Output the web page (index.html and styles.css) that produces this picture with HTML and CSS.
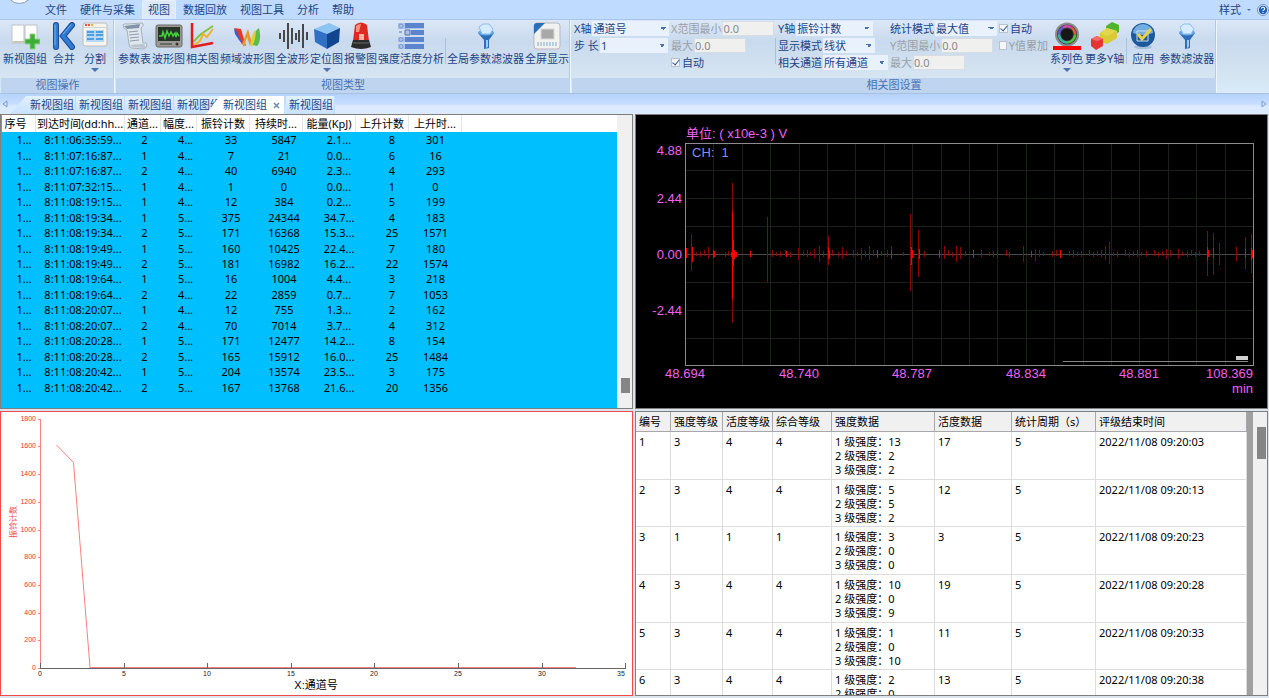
FILE: index.html
```
<!DOCTYPE html>
<html lang="zh-CN">

<head>
    <meta charset="utf-8">
    <title>视图</title>
    <link rel="stylesheet" href="styles.css">
</head>

<body>
    <nav class="menu">
        <span class="menu__orb"></span>
        <a class="menu__item" href="#">文件</a>
        <a class="menu__item" href="#">硬件与采集</a>
        <a class="menu__item active" href="#">视图</a>
        <a class="menu__item" href="#">数据回放</a>
        <a class="menu__item" href="#">视图工具</a>
        <a class="menu__item" href="#">分析</a>
        <a class="menu__item" href="#">帮助</a>
        <div class="menu__right">
            <button class="menu__style">样式<i class="caret small"></i></button>
            <svg width="12" height="12" viewBox="0 0 12 12">
                <circle cx="6" cy="6" r="5.5" fill="#e8eef8" stroke="#5b7fb5" stroke-width=".8" />
                <circle cx="6" cy="6" r="4.2" fill="#1f5fb8" />
                <path d="M4.4 4.8a1.6 1.5 0 1 1 2.4 1.2q-.8.4-.8 1.1M6 8.1v.9" fill="none" stroke="#fff" stroke-width="1.1" />
            </svg>
        </div>
    </nav>

    <header class="ribbon">
        <section class="group">
            <div class="group__body wide">
                <button class="tool">
                    <svg width="30" height="28" viewBox="0 0 30 28">
                        <path d="M2 3h12v18H2zM15 3h12v18H15z" fill="#fdfdfb" stroke="#bfc3c6" />
                        <path d="M3 20h24" stroke="#c9c6bb" stroke-width="2" />
                        <path d="M20 12h5v5h5v5h-5v5h-5v-5h-5v-5h5z" fill="#3fae38" stroke="#8fd486" />
                    </svg>
                    新视图组
                </button>
                <button class="tool">
                    <svg width="26" height="28" viewBox="0 0 26 28">
                        <path d="M5 3v22M21 3 12 14l9 11" fill="none" stroke="#1c4c94" stroke-width="6" stroke-linecap="round" />
                        <path d="M5 3v22M21 3 12 14l9 11" fill="none" stroke="#2f7bd4" stroke-width="4" stroke-linecap="round" />
                        <path d="M4 3v20M20 3l-8 9" fill="none" stroke="#79b2ec" stroke-linecap="round" />
                    </svg>
                    合并
                </button>
                <button class="tool">
                    <svg width="28" height="28" viewBox="0 0 28 28">
                        <rect x="2" y="1" width="24" height="23" rx="2" fill="#f5f4ef" stroke="#bbb" />
                        <path d="M2.500 5.500h23" stroke="#d4d4d0" />
                        <path d="M4 3h2M7 3h2" stroke="#e05a3a" stroke-width="2" />
                        <path d="M10 3h2" stroke="#e6ac48" stroke-width="2" />
                        <rect x="5" y="8" width="18" height="12" fill="#b7d8f4" />
                        <path d="M6 10h7M6 13h7M6 17h7M15 10h7M15 13h7M15 17h7" stroke="#4f9fe0" stroke-width="2" />
                    </svg>
                    分割
                    <i class="caret"></i>
                </button>
            </div>
            <h2 class="group__title">视图操作</h2>
        </section>

        <section class="group views">
            <div class="group__body">
                <button class="tool">
                    <svg width="28" height="28" viewBox="0 0 28 28">
                        <path d="M2 3q2-2 5-1l14-1q3 2-1 5l2 15q4-1 4 2 0 3-4 4l-12-1q-2-1-2-4L6 8Q2 7 2 3z" fill="#dfe6ee" stroke="#a5b1be" />
                        <path d="M3 4l16-2-1 4-12 1z" fill="#8295a8" />
                        <path d="M8 10l9-1M8 13l10-1M9 16l9-1M9 19l9-1" stroke="#8d9cac" />
                        <path d="M9 23l12-1q4 0 3 4l-13-1z" fill="#b8c4d0" />
                    </svg>
                    参数表
                </button>
                <button class="tool">
                    <svg width="28" height="28" viewBox="0 0 28 28">
                        <rect x="1" y="3" width="26" height="22" rx="2" fill="#9a9994" stroke="#6c6b67" />
                        <rect x="3" y="5" width="22" height="14" fill="#26352a" />
                        <path d="M4 14h3l1-4 2 6 2-7 2 5 2-4 2 4 2-3 1 4 1-4 2 3" fill="none" stroke="#45d03c" stroke-width="1.500" />
                        <path d="M5 22h12" stroke="#666" stroke-width="2" />
                        <circle cx="22" cy="22" r="1.500" fill="#333" />
                    </svg>
                    波形图
                </button>
                <button class="tool">
                    <svg width="28" height="28" viewBox="0 0 28 28">
                        <path d="M4 20 12 12 24 4" fill="none" stroke="#84c443" stroke-width="2" />
                        <path d="M5 23l6-4 3-7 4 3 6-8" fill="none" stroke="#f0b32a" stroke-width="2" />
                        <path d="M3 1v24l21-4" fill="none" stroke="#e01c1c" stroke-width="2.500" />
                    </svg>
                    相关图
                </button>
                <button class="tool">
                    <svg width="30" height="28" viewBox="0 0 30 28">
                        <path d="M1 6l7 1 5 17-4-2z" fill="#e23a28" />
                        <path d="M1 7l2 1 7 15-4-5-4-6z" fill="#3c5bd0" />
                        <path d="M9 22l6-15 4 14-2 3-3-9-3 10z" fill="#e8982c" />
                        <path d="M17 22c3-4 3-12 9-16q3 12-2 18z" fill="#5dbb4a" />
                        <path d="M17 22c2-3 1-11 6-14q0 9-4 17z" fill="#d9d23a" />
                    </svg>
                    频域波形图
                </button>
                <button class="tool">
                    <svg width="30" height="28" viewBox="0 0 30 28">
                        <path d="M2 11v6M6 8v12M10 1v26M14 6v16M18 11v7M21 8v12M25 2v24M29 10v8" stroke="#484848" stroke-width="2" />
                    </svg>
                    全波形
                </button>
                <button class="tool">
                    <svg width="28" height="28" viewBox="0 0 28 28">
                        <path d="M1 7 16 1l11 5-13 6z" fill="#8cc4f4" />
                        <path d="M1 7l13 5v15L2 20z" fill="#2f6fc4" />
                        <path d="M14 12l13-6-1 14-12 7z" fill="#12458f" />
                    </svg>
                    定位图
                    <i class="caret"></i>
                </button>
                <button class="tool">
                    <svg width="22" height="28" viewBox="0 0 22 28">
                        <path d="M5 3q6-5 12 0l2 16H3z" fill="#dd2a20" />
                        <path d="M6 4q2-2 5-2l-2 8H6z" fill="#ff8f80" />
                        <path d="M9 12h5v6H9z" fill="#f8b2a4" />
                        <path d="M3 18h16l2 7q-10 4-20 0z" fill="#2b2b2d" />
                        <path d="M3 21h16" stroke="#6a6a6a" />
                    </svg>
                    报警图
                </button>
                <button class="tool">
                    <svg width="28" height="28" viewBox="0 0 28 28">
                        <path d="M1 1h26v6H1zM1 15h26v5H1zM1 22h26v5H1z" fill="#a9c2ee" />
                        <path d="M8 1h19v5H8zM14 8h13v5H14zM8 15h19v5H8zM8 22h19v5H8z" fill="#5c84cc" />
                        <path d="M8 8h5v5H8zM2 10h3" fill="#a9c2ee" stroke="#57729f" />
                        <circle cx="4" cy="4" r="2" fill="none" stroke="#7596d2" />
                        <circle cx="4" cy="17.500" r="2" fill="none" stroke="#7596d2" />
                        <circle cx="4" cy="24.500" r="2" fill="none" stroke="#7596d2" />
                    </svg>
                    强度活度分析
                </button>
                <span class="separator"></span>
                <button class="tool">
                    <svg width="22" height="28" viewBox="0 0 22 28">
                        <path d="M3 11h16l-5 7v8l-5 1v-9z" fill="#2e6eb8" />
                        <path d="M11 18v8l2-1v-7z" fill="#9cc9f2" />
                        <ellipse cx="11" cy="10.500" rx="8" ry="3" fill="#65a5e4" />
                        <path d="M4 5l4-3h6l4 5-3 5H7z" fill="#d5ecff" stroke="#8abdf0" />
                    </svg>
                    全局参数滤波器
                </button>
                <button class="tool">
                    <svg width="28" height="28" viewBox="0 0 28 28">
                        <rect x="1" y="1" width="26" height="26" rx="3" fill="#f2f2f0" stroke="#b5b8bd" />
                        <path d="M1 12V4q0-3 3-3h8z" fill="#2f6db8" />
                        <rect x="8" y="7" width="13" height="10" fill="#a9a9a9" stroke="#d8d8d8" />
                        <path d="M4 21h20M4 23h20" stroke="#7fa6cf" stroke-dasharray="2 1" />
                    </svg>
                    全屏显示
                </button>
            </div>
            <h2 class="group__title">视图类型</h2>
        </section>

        <section class="group settings">
            <div class="group__body">
                <div class="fields fields--x">
                    <label>X轴<select class="grow"><option>通道号</option></select></label>
                    <label>步 长<select class="w68"><option>1</option></select></label>
                </div>
                <div class="fields fields--range">
                    <label class="disabled">X范围最小<input class="w52" type="text" value="0.0" disabled></label>
                    <label class="disabled">最大<input class="w52" type="text" value="0.0" disabled></label>
                    <label class="check"><input type="checkbox" checked>自动</label>
                </div>
                <span class="separator"></span>
                <div class="fields fields--y">
                    <label>Y轴<select class="w77"><option>振铃计数</option></select></label>
                    <label>显示模式<select class="w52"><option>线状</option></select></label>
                    <label>相关通道<select class="grow"><option>所有通道</option></select></label>
                </div>
                <div class="fields fields--stat">
                    <label>统计模式<select class="grow"><option>最大值</option></select></label>
                    <label class="disabled">Y范围最小<input class="w52" type="text" value="0.0" disabled></label>
                    <label class="disabled">最大<input class="w52" type="text" value="0.0" disabled></label>
                </div>
                <div class="fields fields--auto">
                    <label class="check"><input type="checkbox" checked>自动</label>
                    <label class="check disabled"><input type="checkbox" disabled>Y值累加</label>
                </div>
                <button class="tool">
                    <svg width="28" height="28" viewBox="0 0 28 28">
                        <circle cx="14" cy="12.500" r="12" fill="#8c8c8a" />
                        <circle cx="14" cy="12.500" r="10" fill="#3c3c3c" />
                        <g fill="none" stroke-width="2.500">
                            <path d="M6 12.500a8 8 0 0 1 4-7" stroke="#5f56d8" />
                            <path d="M10 5.500a8 8 0 0 1 8 0" stroke="#d04ab4" />
                            <path d="M18 5.500a8 8 0 0 1 4 7" stroke="#e25a42" />
                            <path d="M22 12.500a8 8 0 0 1-8 8" stroke="#54c046" />
                            <path d="M14 20.500a8 8 0 0 1-8-8" stroke="#39b6a8" />
                        </g>
                        <circle cx="14" cy="12.500" r="6" fill="#171717" />
                        <path d="M0 24h28v4H0z" fill="#f00" />
                    </svg>
                    系列色
                    <i class="caret"></i>
                </button>
                <button class="tool">
                    <svg width="30" height="28" viewBox="0 0 30 28">
                        <path d="M16 4l6-4 7 3v7l-6 3-7-3z" fill="#4fb32e" />
                        <path d="M10 11l7-5 10 3v7l-10 6-8-3z" fill="#d8cb34" />
                        <path d="M10 11l7 3 10-5-10-3z" fill="#e2d650" />
                        <path d="M1 17l6-3 6 3v7l-7 4-5-4z" fill="#e43434" />
                        <path d="M1 17l6 2 6-2-6-3z" fill="#ff6a62" />
                    </svg>
                    更多Y轴
                </button>
                <span class="separator"></span>
                <button class="tool">
                    <svg width="28" height="28" viewBox="0 0 28 28">
                        <ellipse cx="14" cy="25" rx="9" ry="2" fill="#a5bede" />
                        <circle cx="14" cy="13" r="12" fill="#1c5a9c" />
                        <path d="M4 11a10 9 0 0 1 20 0q-10 4-20 0z" fill="#74aee0" />
                        <path d="M8 9h11v10H8z" fill="none" stroke="#c7dcef" />
                        <path d="M9 12l4 5 9-10" fill="none" stroke="#e9d24a" stroke-width="3" />
                    </svg>
                    应用
                </button>
                <button class="tool">
                    <svg width="22" height="28" viewBox="0 0 22 28">
                        <path d="M3 11h16l-5 7v8l-5 1v-9z" fill="#2e6eb8" />
                        <path d="M11 18v8l2-1v-7z" fill="#9cc9f2" />
                        <ellipse cx="11" cy="10.500" rx="8" ry="3" fill="#65a5e4" />
                        <path d="M4 5l4-3h6l4 5-3 5H7z" fill="#d5ecff" stroke="#8abdf0" />
                    </svg>
                    参数滤波器
                </button>
            </div>
            <h2 class="group__title">相关图设置</h2>
        </section>
    </header>

    <div class="tabs">
        <button class="tabs__arrow" aria-label="左移">
            <svg width="6" height="8" viewBox="0 0 6 8"><path d="M5 1v6L1 4z" fill="#cfe2fb" stroke="#7b9cce" /></svg>
        </button>
        <button class="tab first">新视图组</button>
        <button class="tab">新视图组</button>
        <button class="tab">新视图组</button>
        <button class="tab cut">新视图组</button>
        <button class="tab active">新视图组
            <svg width="7" height="7" viewBox="0 0 7 7"><path d="M1 1l5 5M6 1 1 6" stroke="#6787b5" stroke-width="1.500" /></svg>
        </button>
        <button class="tab last">新视图组</button>
        <button class="tabs__arrow right" aria-label="右移">
            <svg width="6" height="8" viewBox="0 0 6 8"><path d="M1 1v6l4-3z" fill="#cfe2fb" stroke="#7b9cce" /></svg>
        </button>
    </div>

    <main class="workspace">
        <section class="panel hits">
            <div class="hits__scroll">
                <table class="hits__table">
                    <thead>
                        <tr>
                            <th>序号</th>
                            <th>到达时间(dd:hh...</th>
                            <th>通道...</th>
                            <th>幅度...</th>
                            <th>振铃计数</th>
                            <th>持续时...</th>
                            <th>能量(KpJ)</th>
                            <th>上升计数</th>
                            <th>上升时...</th>
                            <th></th>
                        </tr>
                    </thead>
                    <tbody id="hits"></tbody>
                </table>
            </div>
            <div class="scrollbar"><span class="scrollbar__thumb"></span></div>
        </section>

        <section class="panel wave">
            <svg id="wave" viewBox="0 0 631 293">
                <g id="waveGrid" class="wave__grid"></g>
                <path class="wave__zero" d="M49 139.500H617" />
                <g id="waveSpikes"></g>
                <path d="M95 137h2v-2h2v2h2v5h-2v2h-2v-2h-2z" fill="#f00" />
                <rect class="wave__frame" x="49.500" y="28.500" width="568" height="222" />
                <path d="M427 246.500h185" stroke="#888" />
                <path d="M600 241h12v4h-12z" fill="#d0d0d0" />
                <g class="wave__text">
                    <text x="50" y="23">单位: ( x10e-3 ) V</text>
                    <g text-anchor="end">
                        <text x="46" y="40">4.88</text>
                        <text x="46" y="88">2.44</text>
                        <text x="46" y="144">0.00</text>
                        <text x="46" y="200">-2.44</text>
                        <text x="617" y="263">108.369</text>
                        <text x="617" y="278">min</text>
                    </g>
                    <g text-anchor="middle">
                        <text x="49" y="263">48.694</text>
                        <text x="163" y="263">48.740</text>
                        <text x="276" y="263">48.787</text>
                        <text x="390" y="263">48.834</text>
                        <text x="503" y="263">48.881</text>
                    </g>
                </g>
                <text class="wave__channel" x="56" y="42" xml:space="preserve">CH:  1</text>
            </svg>
        </section>

        <section class="panel chart">
            <svg viewBox="0 0 631 283">
                <g id="yAxis" class="chart__y"><path d="M39.500 7v250" /></g>
                <path class="chart__line" d="M55.500 33 72.500 50.500 89 255.500H575" />
                <g id="xAxis" class="chart__x"><path d="M39 256.500H625" /></g>
                <text class="chart__ytitle" transform="translate(15 110) rotate(-90)">振铃计数</text>
                <text class="chart__xtitle" x="315" y="277">X:通道号</text>
            </svg>
        </section>

        <section class="panel rating">
            <div class="rating__scroll">
                <table class="rating__table">
                    <thead>
                        <tr>
                            <th>编号</th>
                            <th>强度等级</th>
                            <th>活度等级</th>
                            <th>综合等级</th>
                            <th>强度数据</th>
                            <th>活度数据</th>
                            <th>统计周期（s）</th>
                            <th>评级结束时间</th>
                        </tr>
                    </thead>
                    <tbody id="ratings"></tbody>
                </table>
            </div>
            <div class="scrollbar"><span class="scrollbar__thumb"></span></div>
        </section>
    </main>

    <script>
        !(function(d) {
            var hits = [
                ["06:35:59", 2, 4, 33, 5847, "2.1", 8, 301],
                ["07:16:87", 1, 4, 7, 21, "0.0", 6, 16],
                ["07:16:87", 2, 4, 40, 6940, "2.3", 4, 293],
                ["07:32:15", 1, 4, 1, 0, "0.0", 1, 0],
                ["08:19:15", 1, 4, 12, 384, "0.2", 5, 199],
                ["08:19:34", 1, 5, 375, 24344, "34.7", 4, 183],
                ["08:19:34", 2, 5, 171, 16368, "15.3", 25, 1571],
                ["08:19:49", 1, 5, 160, 10425, "22.4", 7, 180],
                ["08:19:49", 2, 5, 181, 16982, "16.2", 22, 1574],
                ["08:19:64", 1, 5, 16, 1004, "4.4", 3, 218],
                ["08:19:64", 2, 4, 22, 2859, "0.7", 7, 1053],
                ["08:20:07", 1, 4, 12, 755, "1.3", 2, 162],
                ["08:20:07", 2, 4, 70, 7014, "3.7", 4, 312],
                ["08:20:28", 1, 5, 171, 12477, "14.2", 8, 154],
                ["08:20:28", 2, 5, 165, 15912, "16.0", 25, 1484],
                ["08:20:42", 1, 5, 204, 13574, "23.5", 3, 175],
                ["08:20:42", 2, 5, 167, 13768, "21.6", 20, 1356]
            ];
            // grade columns, counts per level, activity, end time
            var ratings = [
                [3, 4, 4, [13, 2, 2], 17, "09:20:03"],
                [3, 4, 4, [5, 5, 2], 12, "09:20:13"],
                [1, 1, 1, [3, 0, 0], 3, "09:20:23"],
                [3, 4, 4, [10, 0, 9], 19, "09:20:28"],
                [3, 4, 4, [1, 0, 10], 11, "09:20:33"],
                [3, 4, 4, [2, 0, 9], 13, "09:20:38"]
            ];
            // x, height above zero, height below zero
            var tall = [
                [55, 20, 17], [72, 7, 5], [96, 71, 69], [131, 37, 28], [162, 6, 6], [178, 5, 4],
                [183, 8, 8], [192, 18, 11], [206, 7, 5], [225, 6, 6], [233, 8, 6], [255, 8, 5],
                [274, 40, 37], [282, 24, 23], [308, 8, 5], [320, 8, 8], [324, 7, 5], [361, 6, 4],
                [387, 8, 8], [399, 5, 7], [469, 8, 6], [473, 12, 10], [530, 5, 5], [542, 5, 5],
                [571, 23, 22], [577, 21, 21], [583, 11, 11], [600, 7, 7], [609, 17, 15], [615, 20, 19]
            ];
            var small = [60, 64, 68, 89, 92, 136, 140, 144, 149, 154, 167, 171, 174, 187, 196, 202, 210, 217, 221, 229,
                237, 241, 245, 251, 267, 288, 312, 316, 329, 345, 353, 357, 370, 373, 395, 403, 407, 416, 420, 424,
                433, 437, 441, 445, 453, 457, 461, 465, 477, 481, 489, 493, 497, 501, 505, 510, 518, 522, 526, 534,
                546, 551, 555, 559, 563];
            var bright = [[50, 6, 4], [56, 7, 8], [77, 4, 4], [78, 3, 3], [96, 42, 45], [97, 14, 12], [114, 3, 3],
                [150, 3, 3], [192, 7, 5], [193, 4, 4], [241, 4, 4], [255, 4, 4], [275, 7, 11], [276, 4, 4], [283, 5, 5], [303, 4, 4],
                [337, 4, 4], [395, 3, 3], [424, 4, 4], [571, 7, 7], [572, 4, 3], [577, 6, 4], [609, 5, 4], [615, 6, 6], [616, 4, 4]];

            function addRow(body, cells) {
                var tr = body.insertRow();
                cells.forEach(function(c) {
                    tr.insertCell().innerHTML = c;
                });
            }

            function draw(parent, name, attrs, text) {
                var el = d.createElementNS("http://www.w3.org/2000/svg", name);
                for (var key in attrs) el.setAttribute(key, attrs[key]);
                if (text !== undefined) el.textContent = text;
                parent.appendChild(el);
            }

            hits.forEach(function(h) {
                addRow(d.getElementById("hits"), ["1...", "8:11:" + h[0] + "...", h[1], h[2] + "...", h[3], h[4], h[5] + "...", h[6], h[7], ""]);
            });

            ratings.forEach(function(r, i) {
                var levels = r[3].map(function(n, k) {
                    return (k + 1) + " 级强度：" + n;
                }).join("<br>");
                addRow(d.getElementById("ratings"), [i + 1, r[0], r[1], r[2], levels, r[4], 5, "2022/11/08 " + r[5]]);
            });

            // Waveform grid
            var grid = d.getElementById("waveGrid");
            for (var i = 1; i < 20; i++) {
                draw(grid, "path", { d: "M" + (Math.round(49 + i * 28.4) + 0.5) + " 29V250" });
            }
            for (i = 1; i < 8; i++) {
                draw(grid, "path", { d: "M50 " + (27.5 + i * 28) + "H617" });
            }

            function spikes(list, color) {
                var path = list.map(function(s) {
                    return "M" + (s[0] + 0.5) + " " + (139 - s[1]) + "v" + (s[1] + s[2]);
                }).join("");
                draw(d.getElementById("waveSpikes"), "path", { d: path, stroke: color });
            }
            spikes(small.map(function(x, k) {
                return [x, 2 + k % 3, 2 + k % 2];
            }), "#8a0808");
            spikes(tall, "#8d0606");
            spikes(bright, "#f00");

            // Chart axes
            var y = d.getElementById("yAxis"), x = d.getElementById("xAxis"), pos;
            for (i = 0; i <= 9; i++) {
                pos = Math.round(256 - i * 27.7);
                draw(y, "path", { d: "M37 " + (pos + 0.5) + "h3" });
                draw(y, "text", { x: 35, y: pos + 2 }, i * 200);
            }
            for (i = 0; i <= 7; i++) {
                pos = Math.round(39 + i * 83.6);
                draw(x, "path", { d: "M" + (pos + 0.5) + " 251v5" });
                draw(x, "text", { x: i < 7 ? pos : pos - 4, y: 264 }, i * 5);
            }
        }(document));
    </script>
</body>

</html>
```
FILE: styles.css
```
* {
    box-sizing: border-box;
}

body {
    display: flex;
    flex-direction: column;
    height: 100vh;
    margin: 0;
    overflow: hidden;
    background: #bfdbff;
    color: #000;
    font: 11px/14px "Noto Sans", "Noto Sans CJK SC", sans-serif;
}

button,
input,
select {
    margin: 0;
    padding: 0;
    border: 0;
    background: none;
    color: inherit;
    font: inherit;
}

svg {
    display: block;
}

/* menu */

.menu {
    position: relative;
    display: flex;
    flex: none;
    gap: 1px;
    height: 19px;
    padding-left: 39px;
    overflow: hidden;
    color: #1e4484;
}

.menu__orb {
    position: absolute;
    top: -23px;
    left: 6px;
    width: 27px;
    height: 27px;
    border: 1px solid #8c9cb4;
    border-radius: 50%;
    background: #f6f8fb;
}

.menu__item {
    padding: 3px 6px;
    color: inherit;
    text-decoration: none;
    white-space: nowrap;
}

.menu__item.active {
    border: 1px solid #e6f0fc;
    border-bottom: 0;
    border-radius: 2px 2px 0 0;
    background: #dce9f9;
    padding: 2px 5px;
}

.menu__right {
    display: flex;
    align-items: center;
    gap: 6px;
    margin-left: auto;
}

.menu__style {
    display: flex;
    align-items: center;
    gap: 6px;
}

/* ribbon */

.caret {
    display: block;
    border: 4px solid transparent;
    border-top-color: #4a72b0;
    border-bottom: 0;
}

.caret.small {
    border-width: 2px;
    border-bottom: 0;
}

.ribbon {
    display: flex;
    flex: none;
    gap: 1px;
    height: 75px;
    padding: 0 1px;
    border-top: 1px solid #a9c5ec;
    border-bottom: 1px solid #a9c1e0;
    background: linear-gradient(#dbe7f6, #c9daee 30%, #d4e4f1 75%, #d9ebf9);
    color: #1e4484;
}

.group {
    display: flex;
    flex-direction: column;
    border-right: 1px solid #eef5fd;
    box-shadow: inset -1px 0 #b5c9e2;
}

.group__body {
    display: flex;
    flex: 1;
    padding: 1px 2px 0;
}

.group__body.wide {
    gap: 4px;
    padding-right: 5px;
}

.group__title {
    height: 15px;
    margin: 0;
    background: #bfd4ee;
    color: #4672b4;
    font: inherit;
    text-align: center;
}

.tool {
    display: flex;
    flex-direction: column;
    align-items: center;
    white-space: nowrap;
}

.tool svg {
    margin: 1px 0 2px;
}

.tool .caret {
    margin-top: 2px;
}

.separator {
    width: 1px;
    height: 26px;
    margin-top: 17px;
    background: #a9c1e0;
}

.views .group__body {
    gap: 1px;
    padding: 1px 1px 0 2px;
}

.settings .group__body {
    gap: 2px;
}

.fields {
    display: flex;
    flex-direction: column;
    gap: 2px;
}

.fields label {
    display: flex;
    gap: 1px;
    height: 15px;
    line-height: 15px;
    white-space: nowrap;
}

.fields label.disabled {
    color: #9a9fa6;
}

.fields select {
    appearance: none;
    padding-left: 1px;
    background-color: #e8f1fc;
    background-image: linear-gradient(225deg, #4a72b0 50%, transparent 50%), linear-gradient(135deg, #4a72b0 50%, transparent 50%);
    background-position: right 6px top 6px, right 3px top 6px;
    background-repeat: no-repeat;
    background-size: 3px 3px;
    line-height: 15px;
}

.fields input[type="text"] {
    border: 1px solid #d8dde3;
    background: #f0f0ef;
    color: #8a8a8a;
    line-height: 13px;
}

.fields .check {
    align-items: center;
    gap: 2px;
}

.check input {
    width: 9px;
    height: 9px;
    appearance: none;
    border: 1px solid #b9c3d0;
    background: #f4f6f8;
}

.check input:checked::after {
    content: "";
    display: block;
    width: 3px;
    height: 6px;
    margin: -1px 0 0 2px;
    border: solid #33599a;
    border-width: 0 1px 1px 0;
    transform: rotate(40deg);
}

.grow {
    flex: 1;
    min-width: 0;
}

.w52 {
    width: 52px;
}

.w68 {
    width: 68px;
}

.w77 {
    width: 77px;
}

.fields--x {
    width: 95px;
}

.fields--range {
    width: 102px;
}

.fields--y {
    width: 110px;
}

.fields--stat {
    width: 107px;
}

.fields--auto {
    width: 49px;
}

/* view tabs */

.tabs {
    display: flex;
    flex: none;
    align-items: flex-end;
    height: 20px;
    background: linear-gradient(#b5d2fb, #c7deff 50%, #dceaff 60%, #dceaff);
    color: #1e4484;
}

.tabs__arrow {
    width: 10px;
    padding: 0 2px;
    align-self: center;
}

.tabs__arrow.right {
    margin-left: auto;
}

.tab {
    width: 49px;
    height: 18px;
    padding-left: 3px;
    border-right: 1px solid #c4dcfa;
    background: linear-gradient(#e2f1ff, #c8e2ff);
    text-align: left;
    white-space: nowrap;
    overflow: hidden;
}

.tab.first {
    width: 66px;
    padding-left: 20px;
    clip-path: polygon(16px 0, 100% 0, 100% 100%, 0 100%);
}

.tab.cut {
    width: 46px;
    border: 0;
}

.tab.active {
    display: flex;
    align-items: center;
    gap: 6px;
    width: 79px;
    margin-left: -14px;
    padding-left: 17px;
    background: #fff;
    clip-path: polygon(14px 0, 100% 0, 100% 100%, 0 100%);
}

.tab.last {
    margin-left: 1px;
}

/* workspace */

.workspace {
    display: grid;
    flex: 1;
    grid-template-columns: 1fr 1fr;
    grid-template-rows: 295fr 285fr;
    gap: 2px;
    min-height: 0;
    padding: 0 1px 2px 0;
    background: #dce4ee;
}

.panel {
    display: flex;
    min-width: 0;
    min-height: 0;
    overflow: hidden;
    border: 1px solid #7f7f7f;
    background: #fff;
}

.panel > svg {
    width: 100%;
    height: 100%;
}

table {
    width: 100%;
    table-layout: fixed;
    border-collapse: separate;
    border-spacing: 0;
}

th {
    font-weight: normal;
}

.scrollbar {
    flex: none;
    width: 15px;
    background: #f0f0f0;
}

.scrollbar__thumb {
    display: block;
    width: 9px;
    margin-left: 4px;
    background: #858585;
}

.hits__scroll {
    flex: 1;
    padding-left: 1px;
    background: #00bfff;
}

.hits__table {
    height: 280px;
}

.hits__table th {
    height: 17px;
    padding: 0;
    border-right: 1px solid #e5e5e5;
    background: #fff;
    white-space: nowrap;
}

.hits__table th:last-child {
    border: 0;
}

.hits__table td {
    padding: 0;
    line-height: 15px;
    text-align: center;
    white-space: nowrap;
}

.hits__table th:nth-child(1) {
    width: 34px;
    padding-right: 6px;
}

.hits__table th:nth-child(2) {
    width: 89px;
}

.hits__table th:nth-child(3),
.hits__table th:nth-child(4) {
    width: 36px;
}

.hits__table th:nth-child(n+5):nth-child(-n+9) {
    width: 53px;
}

.hits__table td:nth-child(1) {
    padding-left: 10px;
}

.hits__table td:nth-child(2) {
    padding-left: 5px;
}

.hits__table td:nth-child(3) {
    padding-left: 3px;
}

.hits__table td:nth-child(4) {
    padding-left: 13px;
}

.hits__table td:nth-child(5),
.hits__table td:nth-child(6) {
    padding-left: 15px;
}

.hits__table td:nth-child(7),
.hits__table td:nth-child(8) {
    padding-left: 19px;
}

.hits .scrollbar__thumb {
    height: 15px;
    margin-top: 263px;
}

/* waveform */

.wave {
    background: #000;
}

.wave__grid {
    stroke: #182018;
}

.wave__zero {
    stroke: #4a4a4a;
}

.wave__frame {
    fill: none;
    stroke: #8c8c8c;
}

.wave__text {
    fill: #f062f0;
    font: 13px "Liberation Sans", "Noto Sans CJK SC", sans-serif;
}

.wave__channel {
    fill: #7a92f0;
    font: 13px "Liberation Sans", sans-serif;
}

/* correlation chart */

.chart {
    border-color: #f04a4a;
}

.chart text {
    font: 7px "Liberation Sans", "Noto Sans CJK SC", sans-serif;
}

.chart__y path,
.chart__line {
    fill: none;
    stroke: #f98080;
}

.chart__y text {
    fill: #f03030;
    text-anchor: end;
}

.chart__x path {
    stroke: #666;
}

.chart__x text {
    fill: #222;
    text-anchor: middle;
}

.chart .chart__ytitle {
    fill: #f05050;
    font-size: 8px;
    text-anchor: middle;
}

.chart .chart__xtitle {
    font-size: 11px;
    text-anchor: middle;
}

/* rating table */

.rating__scroll {
    flex: 1;
    overflow: hidden;
    border-right: 6px solid #a0a0a0;
}

.rating__table {
    height: 306px;
}

.rating__table th,
.rating__table td {
    padding: 3px 0 0 3px;
    border-right: 1px solid #dcdcdc;
    border-bottom: 1px solid #dcdcdc;
    text-align: left;
    vertical-align: top;
    white-space: nowrap;
}

.rating__table th {
    height: 20px;
    border-color: #a8a8ac;
    background: #f0f0f0;
}

.rating__table th:nth-child(1) {
    width: 35px;
}

.rating__table th:nth-child(2) {
    width: 52px;
}

.rating__table th:nth-child(3) {
    width: 50px;
}

.rating__table th:nth-child(4) {
    width: 59px;
}

.rating__table th:nth-child(5) {
    width: 103px;
}

.rating__table th:nth-child(6) {
    width: 77px;
}

.rating__table th:nth-child(7) {
    width: 84px;
}

.rating .scrollbar {
    width: 14px;
}

.rating .scrollbar__thumb {
    height: 32px;
    margin-top: 15px;
}
```
